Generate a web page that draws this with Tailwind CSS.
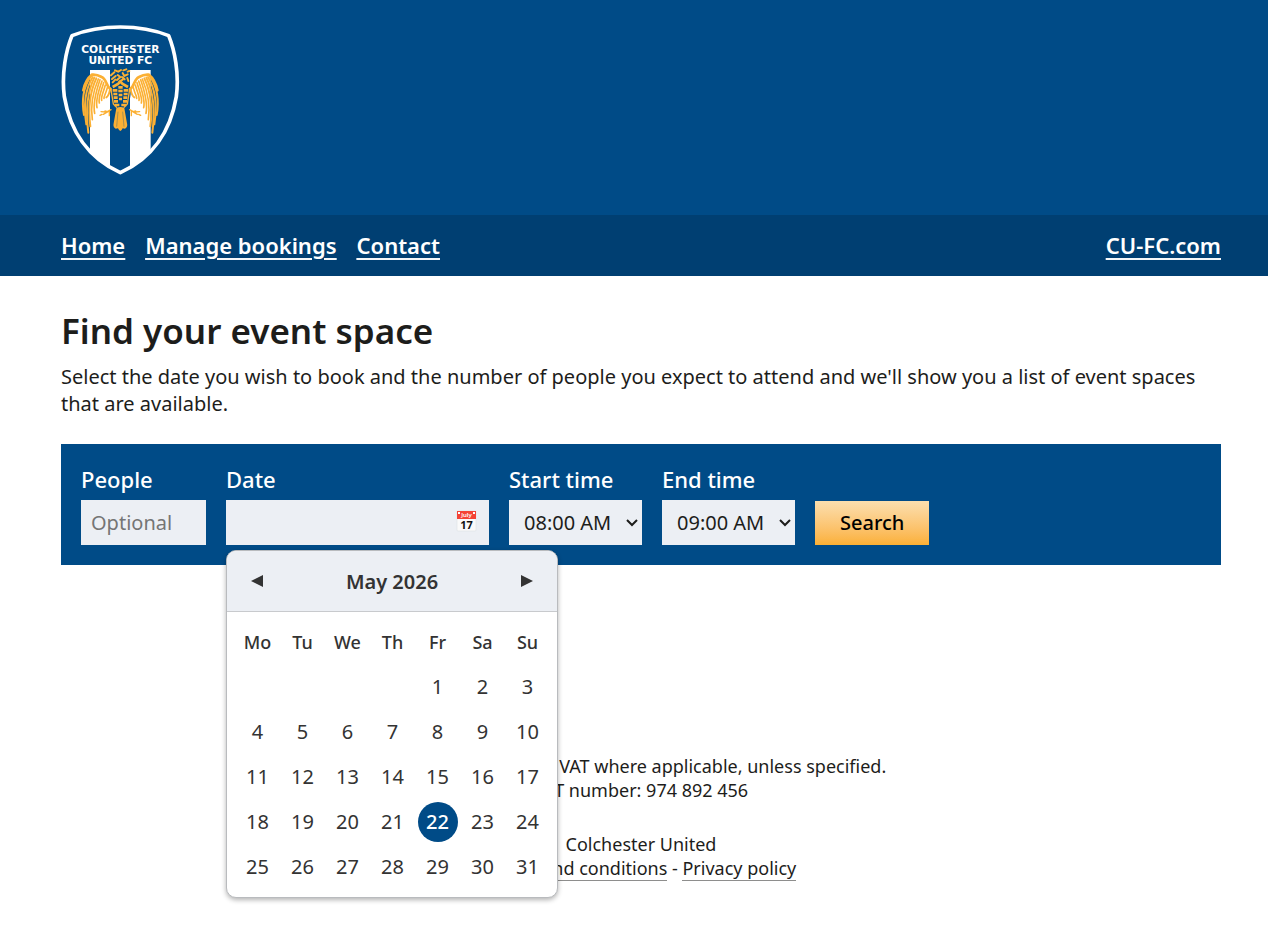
<!DOCTYPE html>
<html lang="en">
<head>
  <meta charset="UTF-8" />
  <meta name="viewport" content="width=device-width, initial-scale=1.0" />
  <title>Find your event space - Colchester United</title>
  <script src="https://cdn.jsdelivr.net/npm/@tailwindcss/browser@4"></script>
</head>
<body class="bg-white font-['Noto_Sans',sans-serif] text-xl leading-[27px] text-[#1d1d1b]">

  <header class="bg-[#004b87] pt-[25px] pb-10 pl-[61px] pr-[47px]">
    <a href="#" class="block w-[119px]" aria-label="Colchester United FC">
      <svg class="block" width="119" height="150" viewBox="33 30 357 450">
        <defs>
          <clipPath id="shield">
            <path d="M65 62Q130 36 211 36Q292 36 357 62C374 106 388 175 379 245C362 347 308 430 211 473C114 430 60 347 43 245C34 175 48 106 65 62Z" />
          </clipPath>
          <g id="wing" fill="none" stroke="#fbb034" stroke-linecap="round" stroke-linejoin="round">
            <path stroke-width="8" d="M182 222C168 216 172 194 155 186C146 181 136 178 126 179C112 190 104 206 100 226" />
            <path stroke-width="6" d="M122 184C102 214 94 256 102 300" />
            <path stroke-width="6" d="M128 186C106 222 100 270 109 328" />
            <path stroke-width="6" d="M133 188C114 226 106 284 115 353" />
            <path stroke-width="6" d="M139 190C121 228 114 280 121 334" />
            <path stroke-width="5" d="M145 192C129 230 121 272 127 314" />
            <path stroke-width="5" d="M150 194C137 232 128 266 134 295" />
            <path stroke-width="5" d="M156 198C144 232 136 258 141 278" />
            <path stroke-width="5" d="M161 203C152 234 144 250 148 264" />
            <path stroke-width="5" d="M166 210C159 236 152 246 155 256" />
            <path stroke-width="5" d="M172 218C167 238 161 244 162 250" />
            <path stroke-width="6" d="M180 224C177 240 173 245 169 247" />
            <path stroke-width="4" d="M183 284L172 290L165 288M178 288L178 302M174 290L160 298M166 291L153 290M156 298L150 301" />
          </g>
        </defs>
        <g clip-path="url(#shield)">
          <path fill="#fff" d="M120 165H180V480H120ZM240 165H302V480H240Z" />
        </g>
        <path fill="none" stroke="#fff" stroke-width="11" stroke-linejoin="round" d="M66 62Q130 36 211 36Q292 36 356 62C374 106 388 175 379 245C362 347 308 430 211 473C114 430 60 347 43 245C34 175 48 106 66 62Z" />
        <path fill="#004b87" d="M178 222L211 199L244 222L236 280H186Z" />
        <use href="#wing" />
        <use href="#wing" transform="translate(422 0) scale(-1 1)" />
        <!-- Head -->
        <path fill="none" stroke="#fbb034" stroke-width="6" stroke-linecap="round" d="M183 181L193 172M186 192L197 183M195 166L205 170L213 165M220 166L229 163M203 180L211 186L201 195M218 174L223 183L233 178M224 193L216 186M188 202L196 194M233 170L238 168M208 200L218 194M232 189L235 198" />
        <path fill="none" stroke="#fbb034" stroke-width="8" d="M188 216L204 207L211 200L218 207L234 216" />
        <!-- Body -->
        <path fill="none" stroke="#fbb034" stroke-width="8" d="M188 226H202M205 217H218M221 226H235M190 237H202M205 228H218M221 237H233M191 248H203M206 240H217M220 248H232M192 259H204M207 252H216M219 259H231M194 270H208M214 270H229" />
        <path fill="none" stroke="#fbb034" stroke-width="4" d="M183 224L190 267L201 278M239 224L232 267L221 278" />
        <path fill="#fbb034" d="M199 280Q211 272 223 280L231 325Q234 337 225 341L218 340Q211 356 204 340L197 341Q188 337 191 325Z" />
        <path fill="none" stroke="#004b87" stroke-width="1" d="M204 290L200 335M218 290L222 335" />
        <g fill="#fff" font-family="DejaVu Sans, sans-serif" font-weight="700" text-anchor="middle">
          <text x="211" y="113" font-size="32">COLCHESTER</text>
          <text x="211" y="146" font-size="32">UNITED FC</text>
        </g>
      </svg>
    </a>
  </header>

  <nav class="flex flex-wrap gap-x-5 bg-[#003f72] py-4 pl-[61px] pr-[47px] text-[22px] leading-[29px] font-semibold text-white underline decoration-white/80 decoration-2 underline-offset-4">
    <a href="#">Home</a>
    <a href="#">Manage bookings</a>
    <a href="#">Contact</a>
    <a href="#" class="ml-auto">CU-FC.com</a>
  </nav>

  <main class="pl-[61px] pr-[47px] pt-8">
    <h1 class="text-[35px] leading-[45px] font-semibold">Find your event space</h1>
    <p class="mt-[10px]">Select the date you wish to book and the number of people you expect to attend and we'll show you a list of event spaces that are available.</p>

    <form class="mt-[27px] flex flex-wrap items-end gap-5 bg-[#004b87] p-5">
      <div>
        <label for="people" class="block pb-[6px] text-[22px] leading-[30px] font-medium text-white">People</label>
        <input id="people" type="text" placeholder="Optional" class="block h-[45px] w-[125px] bg-[#eceff4] px-[10px] placeholder:text-[#757575]" />
      </div>

      <div class="relative">
        <label for="date" class="block pb-[6px] text-[22px] leading-[30px] font-medium text-white">Date</label>
        <input id="date" type="text" class="block h-[45px] w-[263px] bg-[#eceff4] pl-[10px] pr-10" />
        <svg class="pointer-events-none absolute right-3 bottom-3" width="21" height="23" viewBox="0 0 21 23">
          <rect x="1" y="1" width="19" height="20" rx="1" fill="#fafafa" stroke="#dde0e4" stroke-width=".6" />
          <path fill="#f44336" d="M1 1H20V9H1Z" />
          <path fill="#fff" d="M2 2H4V4H2ZM17 2H19V4H17Z" />
          <text x="10.500" y="7" font-family="Noto Sans, sans-serif" font-size="6" font-weight="600" fill="#fff" text-anchor="middle">July</text>
          <text x="10.500" y="19" font-family="Noto Sans, sans-serif" font-size="11" font-weight="700" fill="#111" text-anchor="middle">17</text>
        </svg>

        <!-- Date picker -->
        <div class="absolute top-full left-0 z-10 mt-[5px] w-[332px] overflow-hidden rounded-[10px] border border-[#b9bbbe] bg-white text-[#333] shadow-[0_2px_5px_rgba(0,0,0,0.3)]">
          <div class="flex h-[61px] items-center justify-between border-b border-[#c8cacd] bg-[#eceff4] px-2">
            <button type="button" aria-label="Previous month" class="flex h-11 w-11 items-center justify-center">
              <svg width="12" height="14" viewBox="0 0 12 14"><path fill="#333" d="M12 1V13L0 7Z" /></svg>
            </button>
            <span class="font-semibold">May 2026</span>
            <button type="button" aria-label="Next month" class="flex h-11 w-11 items-center justify-center">
              <svg width="12" height="14" viewBox="0 0 12 14"><path fill="#333" d="M0 1V13L12 7Z" /></svg>
            </button>
          </div>
          <div class="pt-[7px] pr-[7px] pb-2 pl-2">
            <table class="w-full table-fixed text-center">
              <thead>
                <tr class="h-[45px] text-lg">
                  <th class="font-medium">Mo</th><th class="font-medium">Tu</th><th class="font-medium">We</th><th class="font-medium">Th</th><th class="font-medium">Fr</th><th class="font-medium">Sa</th><th class="font-medium">Su</th>
                </tr>
              </thead>
              <tbody>
                <tr class="h-[45px]"><td></td><td></td><td></td><td></td><td>1</td><td>2</td><td>3</td></tr>
                <tr class="h-[45px]"><td>4</td><td>5</td><td>6</td><td>7</td><td>8</td><td>9</td><td>10</td></tr>
                <tr class="h-[45px]"><td>11</td><td>12</td><td>13</td><td>14</td><td>15</td><td>16</td><td>17</td></tr>
                <tr class="h-[45px]"><td>18</td><td>19</td><td>20</td><td>21</td><td><span class="mx-auto block size-10 rounded-full bg-[#004b87] leading-10 font-medium text-white">22</span></td><td>23</td><td>24</td></tr>
                <tr class="h-[45px]"><td>25</td><td>26</td><td>27</td><td>28</td><td>29</td><td>30</td><td>31</td></tr>
              </tbody>
            </table>
          </div>
        </div>
      </div>

      <div class="relative">
        <label for="start" class="block pb-[6px] text-[22px] leading-[30px] font-medium text-white">Start time</label>
        <select id="start" class="block h-[45px] w-[133px] appearance-none bg-[#eceff4] pl-[15px]">
          <option>08:00 AM</option>
        </select>
        <svg class="pointer-events-none absolute right-1 bottom-[18px]" width="12" height="8" viewBox="0 0 12 8" fill="none" stroke="#1d1d1b" stroke-width="2"><path d="M1 1L6 6L11 1" /></svg>
      </div>

      <div class="relative">
        <label for="end" class="block pb-[6px] text-[22px] leading-[30px] font-medium text-white">End time</label>
        <select id="end" class="block h-[45px] w-[133px] appearance-none bg-[#eceff4] pl-[15px]">
          <option>09:00 AM</option>
        </select>
        <svg class="pointer-events-none absolute right-1 bottom-[18px]" width="12" height="8" viewBox="0 0 12 8" fill="none" stroke="#1d1d1b" stroke-width="2"><path d="M1 1L6 6L11 1" /></svg>
      </div>

      <button type="submit" class="h-11 bg-linear-to-b from-[#fbdfae] to-[#fbb034] px-[25px] pb-0.5 font-medium text-black">Search</button>
    </form>
  </main>

  <footer class="mt-[189px] pb-[54px] pl-[61px] pr-[47px] text-center text-lg leading-6">
    <p>All prices including VAT where applicable, unless specified.<br />VAT number: 974 892 456</p>
    <p class="mt-[30px]">Colchester United<br />
      <a href="#" class="border-b border-[#8e8e8d]">Terms and conditions</a> - <a href="#" class="border-b border-[#8e8e8d]">Privacy policy</a></p>
  </footer>

</body>
</html>
